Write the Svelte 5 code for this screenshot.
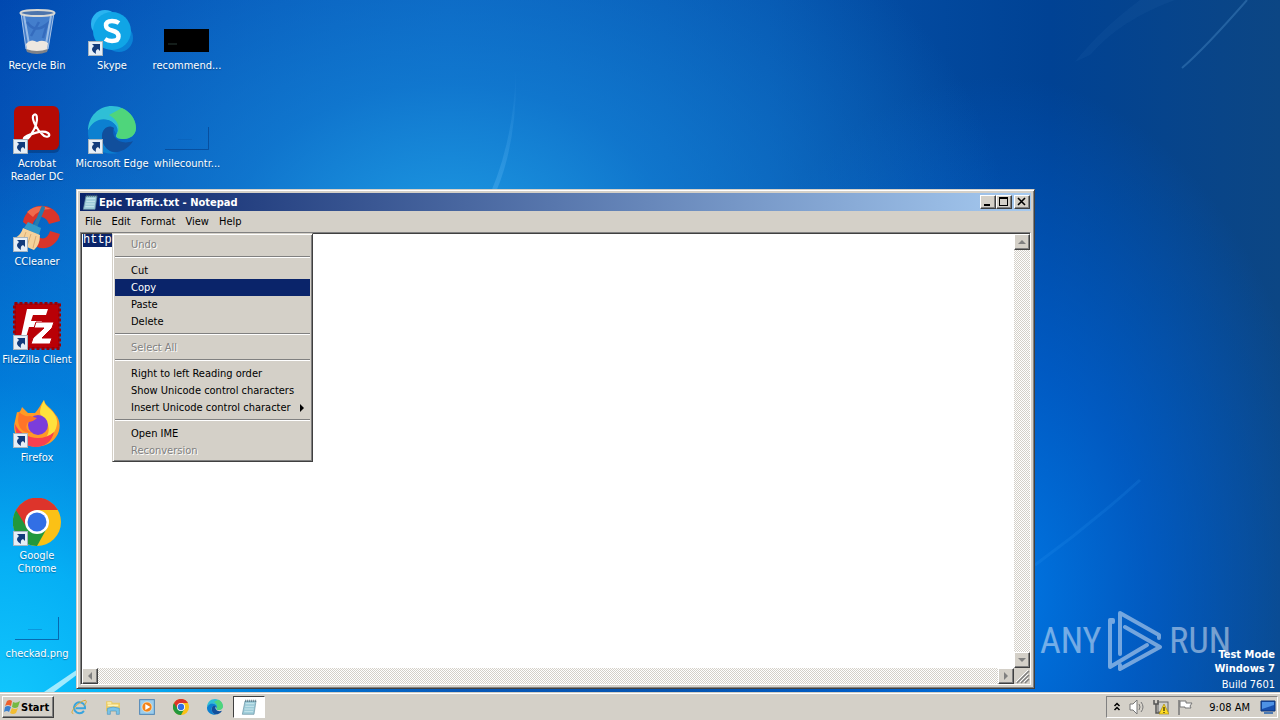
<script>
  const shortcuts = [
    { id: 'bin', label: 'Recycle Bin' },
    { id: 'acrobat', label: 'Acrobat Reader DC', link: true },
    { id: 'ccleaner', label: 'CCleaner', link: true },
    { id: 'filezilla', label: 'FileZilla Client', link: true },
    { id: 'firefox', label: 'Firefox', link: true },
    { id: 'chrome', label: 'Google Chrome', link: true },
    { id: 'clear', label: 'checkad.png' },
    { id: 'skype', label: 'Skype', link: true },
    { id: 'edge', label: 'Microsoft Edge', link: true }
  ];
  const files = [
    { id: 'black', label: 'recommend...' },
    { id: 'clear', label: 'whilecountr...' }
  ];
  const columns = [shortcuts.slice(0, 7), shortcuts.slice(7), files];
  const menus = ['File', 'Edit', 'Format', 'View', 'Help'];
  const groups = [
    [{ t: 'Undo', off: true }],
    [{ t: 'Cut' }, { t: 'Copy', on: true }, { t: 'Paste' }, { t: 'Delete' }],
    [{ t: 'Select All', off: true }],
    [{ t: 'Right to left Reading order' }, { t: 'Show Unicode control characters' }, { t: 'Insert Unicode control character', sub: true }],
    [{ t: 'Open IME' }, { t: 'Reconversion', off: true }]
  ];
  const pinned = ['ie', 'explorer', 'media', 'chrome', 'edge'];
  const names = { ie: 'Internet Explorer', explorer: 'Explorer', media: 'Media Player', chrome: 'Chrome', edge: 'Edge' };
</script>

{#snippet icon(id)}
  <svg viewBox="0 0 48 48" aria-hidden="true">
    {#if id === 'bin'}
      <path d="M8 5L13 41Q24 48 35 41L41 5Z" fill="#6f9fdc" fill-opacity=".6" stroke="#a9c3e6" />
      <path d="M11 8L16 36M38 8L33 36" stroke="#dfeefc" stroke-width="2" opacity=".55" />
      <path d="M14 14Q22 26 34 16L30 30M18 28L26 14" stroke="#2c5fb4" stroke-width="2.500" fill="none" opacity=".6" />
      <path d="M13 36Q18 30 24 34Q30 31 35 35L34 43Q24 47 14 43Z" fill="#eee8e0" />
      <path d="M13 41Q24 45 35 41L34 44Q24 48 14 44Z" fill="#7f8288" />
      <ellipse cx="24.500" cy="5" rx="17" ry="3" fill="#4c74ac" stroke="#d8d8d4" stroke-width="2" />
    {:else if id === 'skype'}
      <circle cx="17" cy="16" r="14" fill="#2ab4f0" />
      <circle cx="31" cy="30" r="14" fill="#0a82d6" />
      <circle cx="24" cy="23" r="19" fill="#10a5e6" />
      <path d="M31 15Q28 13 24 13Q18 13 18 17.500Q18 21 24 22.500Q30.500 24 30.500 28.500Q30.500 33 24 33Q20 33 17 31" fill="none" stroke="#fff" stroke-width="4.500" />
    {:else if id === 'black'}
      <path d="M1 21h45v23H1z" fill="#000" /><path d="M5 36h9" stroke="#293a34" />
    {:else if id === 'clear'}
      <path d="M2 43.500h43.500V21" fill="none" stroke="#053f88" stroke-opacity=".65" /><path d="M15 33.500h14" stroke="#0a5ab0" stroke-opacity=".35" />
    {:else if id === 'acrobat'}
      <rect x="3" y="3" width="44" height="44" rx="6" fill="#042e66" opacity=".45" />
      <rect x="1" y="0" width="45" height="44" rx="6" fill="#b50b04" />
      <path d="M12 35C14 27 30 24 35 27C39 30 33 33 29 28C24 24 19 14 20 10C24 5 25 13 23 19C21 25 15 34 12 34C9 33 12 30 18 28" fill="none" stroke="#fff" stroke-width="2.200" />
    {:else if id === 'edge'}
      <path d="M0 25C0 10 11 0 24 0C38 0 48 11 48 22C48 29 42 33 36 33C31 33 27 32 28 29C32 22 25 14 17 14C8 14 3 19 0 25Z" fill="#2fbfd6" />
      <path d="M34 2C43 6 48 14 48 22C48 29 42 33 36 33C31 33 27 32 29 28C33 21 29 13 21 9Z" fill="#5bdc5c" fill-opacity=".75" />
      <path d="M0 25C4 14 16 10 24 16C30 20 31 25 28 28C25 18 13 21 14 31C15 41 22 47 30 47C14 50-1 41 0 25Z" fill="#0c80d0" />
      <path d="M14 31C14 22 21 18 26 22C22 31 32 40 45 35C39 45 28 48 22 45C17 42 14 37 14 31Z" fill="#114f9c" />
    {:else if id === 'ccleaner'}
      <path d="M46 12C35-5 13 1 10 18L19 25C19 13 31 8 36 20L47 17ZM16 29C17 49 42 49 47 30L37 27C33 39 25 34 23 29Z" fill="#d9352a" />
      <path d="M14 8Q24-1 38 5Q26 5 20 13Z" fill="#f06a4b" />
      <path d="M30 4L22 23" stroke="#267cae" stroke-width="4" stroke-linecap="round" />
      <path d="M15 18L28 24L26 31L11 24Z" fill="#329ac9" />
      <path d="M10 24L27 31Q27 41 21 46Q10 42 2 34Q8 31 10 24Z" fill="#f5d29b" />
      <path d="M13 28L9 39M18 30L14 42M23 32L20 44" stroke="#d9ac73" />
    {:else if id === 'filezilla'}
      <rect x="1.500" y="1.500" width="45" height="45" fill="#b90006" stroke="#980006" stroke-width="3" stroke-dasharray="3 2" />
      <path d="M14 7H35L33 13H20L18 19H29L27 25H16L12 39H7Z" fill="#fff" />
      <path d="M23 20H41L39 26L29 36H39L37 42H18L20 36L31 26H21Z" fill="#fff" stroke="#b90006" />
    {:else if id === 'firefox'}
      <path d="M4 12C7 13 8 10 9 7L15 13L22 13C25 10 28 4 31 0C32 6 39 8 42 14C48 20 48 30 43 37C37 46 24 49 14 45C4 41-1 31 2 21Z" fill="#ff9a26" />
      <path d="M31 0C31 7 39 8 43 17C47 27 39 38 31 40C39 32 36 22 29 17C25 13 28 6 31 0Z" fill="#ffe13d" />
      <path d="M2 24C8 38 29 43 41 32C39 42 31 47 22 47C9 46 2 36 2 24Z" fill="#f8404f" />
      <circle cx="25" cy="25" r="10" fill="#7b3ddb" />
      <path d="M6 12Q11 17 17 16L24 18Q20 22 15 22Q10 30 20 33Q6 34 5 20Z" fill="#ff7428" />
    {:else if id === 'chrome'}
      <circle cx="24" cy="24" r="24" fill="#fbc116" />
      <path d="M24 24L3 12A24 24 0 0 0 24 48L34 30Z" fill="#22983d" />
      <path d="M3 12A24 24 0 0 1 45 12H24L14 30Z" fill="#dd342b" />
      <circle cx="24" cy="24" r="12" fill="#fff" /><circle cx="24" cy="24" r="9.500" fill="#326fe5" />
    {:else if id === 'ie'}
      <path d="M39 36Q29 47 17 40Q5 32 11 19Q18 7 31 11Q43 15 42 28H14" fill="none" stroke="#38a4de" stroke-width="6" />
      <path d="M7 44C-9 42 27 4 43 4C50 6 42 17 39 20" fill="none" stroke="#dca82b" stroke-width="3" />
    {:else if id === 'explorer'}
      <path d="M3 7H20L23 11H45V37H3Z" fill="#eacb68" /><path d="M7 12H19M8 19H40" stroke="#fff4b4" stroke-width="5" />
      <path d="M7 28Q24 20 43 28V46H34V36H16V46H7Z" fill="#79c4e9" stroke="#5297bf" stroke-width="2" />
    {:else if id === 'media'}
      <rect x="2" y="2" width="44" height="44" fill="#9ccdec" stroke="#4b84b5" stroke-width="3" />
      <circle cx="24" cy="24" r="15" fill="#f28217" stroke="#fff0cd" stroke-width="2" /><path d="M19 15L34 24L19 33Z" fill="#fff" />
    {:else if id === 'notepad'}
      <path d="M12 6H45L39 46H4Z" fill="#9ccbd8" stroke="#6b93a3" stroke-width="2" />
      <path d="M14 14H40M13 22H39M11 30H38M10 38H36" stroke="#c9e6ec" stroke-width="3" />
      <path d="M14 2V9M20 2V9M26 2V9M32 2V9M38 2V9M44 2V9" stroke="#45606b" stroke-width="2" />
    {/if}
  </svg>
{/snippet}

{#snippet arrow(d)}
  <svg class="arrow" viewBox="0 0 8 8" aria-hidden="true"><path {d} fill="#808080" /></svg>
{/snippet}

<div class="screen">
  <main class="desktop">
    <svg class="rays" viewBox="0 0 1280 692" preserveAspectRatio="none" aria-hidden="true">
      <defs>
        <linearGradient id="ray" x1="0" y1="0" x2="0" y2="1"><stop stop-color="#79c8ff" stop-opacity="0" /><stop offset=".7" stop-color="#79c8ff" stop-opacity=".18" /><stop offset="1" stop-color="#79c8ff" stop-opacity=".25" /></linearGradient>
      </defs>
      <path d="M516 65Q515 135 491 192H496Q518 140 516 65Z" fill="url(#ray)" />
      <path d="M1247 0Q1205 48 1182 68" stroke="#5598d0" stroke-opacity=".35" stroke-width="2" fill="none" />
      <path d="M1140 0Q1100 30 1075 62L1090 55Q1120 20 1175 0Z" fill="#4a90d0" fill-opacity=".08" />
      <path d="M44 692L78 669V674L54 692Z" fill="#c8f6ff" fill-opacity=".8" />
      <path d="M1035 565Q1090 525 1140 480" stroke="#36a0fa" stroke-opacity=".15" stroke-width="3" fill="none" />
    </svg>

    <div class="columns">
      {#each columns as column}
        <div class="column">
          {#each column as item}
            <button class="shortcut">
              <span class="pic">
                {@render icon(item.id)}
                {#if item.link}
                  <svg class="badge" viewBox="0 0 15 15" aria-hidden="true">
                    <rect x=".5" y=".5" width="14" height="14" fill="#e6eef6" stroke="#a7b4bf" />
                    <path d="M4 3H12V10L10 8Q7 9 8 13Q1 9 6 5Z" fill="#123b7b" />
                  </svg>
                {/if}
              </span>
              <span class="label">{item.label}</span>
            </button>
          {/each}
        </div>
      {/each}
    </div>

    <div class="brand">
      <span>ANY</span>
      <svg viewBox="0 0 56 62" aria-hidden="true">
        <path d="M6 12V10H3V57L40 35" />
        <path d="M13 44V3L52 25V28" />
        <path d="M18 17L53 37L13 59V55" />
      </svg>
      <span>RUN</span>
    </div>
    <div class="build"><strong>Test Mode</strong><strong>Windows 7</strong><span>Build 7601</span></div>

    <section class="window">
      <header class="title">
        <span class="mini">{@render icon('notepad')}</span>
        <h1>Epic Traffic.txt - Notepad</h1>
        <button class="ctl" aria-label="Minimize"><svg viewBox="0 0 12 10"><path d="M2 7H8V9H2Z" /></svg></button>
        <button class="ctl" aria-label="Maximize"><svg viewBox="0 0 12 10"><path d="M1 0H10V9H1ZM2 2V8H9V2Z" fill-rule="evenodd" /></svg></button>
        <button class="ctl close" aria-label="Close"><svg viewBox="0 0 12 10"><path d="M2 1L9 8M9 1L2 8" stroke="#000" stroke-width="1.600" /></svg></button>
      </header>
      <nav class="menubar">
        {#each menus as m}<button>{m}</button>{/each}
      </nav>
      <div class="editor">
        <div class="paper"><mark>http</mark></div>
        <div class="bar vertical">
          <button aria-label="Scroll up">{@render arrow('M0 6L4 2L8 6Z')}</button>
          <button aria-label="Scroll down">{@render arrow('M0 2L4 6L8 2Z')}</button>
        </div>
        <div class="bar horizontal">
          <button aria-label="Scroll left">{@render arrow('M6 0L2 4L6 8Z')}</button>
          <button aria-label="Scroll right">{@render arrow('M2 0L6 4L2 8Z')}</button>
        </div>
        <div class="grip">
          <svg viewBox="0 0 16 16" aria-hidden="true"><path d="M3 15L15 3M7 15L15 7M11 15L15 11" stroke="#808080" stroke-width="1.500" /><path d="M2 14L14 2M6 14L14 6M10 14L14 10" stroke="#fff" /></svg>
        </div>
      </div>
      <div class="popup" role="menu">
        {#each groups as group}
          <div class="group">
            {#each group as g}
              <button role="menuitem" class:off={g.off} class:on={g.on} disabled={g.off}>
                <span>{g.t}</span>
                {#if g.sub}<svg viewBox="0 0 5 8" aria-hidden="true"><path d="M0 0L4 4L0 8Z" /></svg>{/if}
              </button>
            {/each}
          </div>
        {/each}
      </div>
    </section>
  </main>

  <footer class="taskbar">
    <button class="start">
      <svg viewBox="0 0 16 16" aria-hidden="true">
        <path d="M3 2Q6 0 8 2L7 7Q4 5 1 7Z" fill="#ed602d" /><path d="M9 3Q12 5 16 2L14 8Q11 10 8 8Z" fill="#75b943" />
        <path d="M1 8Q4 6 7 8L5 13Q3 11 0 13Z" fill="#3a80cf" /><path d="M8 9Q11 11 14 9L12 14Q9 16 6 14Z" fill="#f2bd32" />
      </svg>
      <b>Start</b>
    </button>
    <nav class="pins">
      {#each pinned as p}<button aria-label={names[p]}>{@render icon(p)}</button>{/each}
      <button class="active" aria-label="Notepad">{@render icon('notepad')}</button>
    </nav>
    <div class="tray">
      <svg class="chev" viewBox="0 0 8 12" aria-hidden="true"><path d="M1.500 5L4 2.500L6.500 5M1.500 9L4 6.500L6.500 9" fill="none" stroke="#000" stroke-width="1.500" /></svg>
      <svg viewBox="0 0 16 16" aria-hidden="true"><path d="M1 5H4L8 1V15L4 11H1Z" fill="#fff" stroke="#777" /><path d="M10 5Q12 8 10 11M12 3Q16 8 12 13" fill="none" stroke="#777" /></svg>
      <svg viewBox="0 0 16 16" aria-hidden="true"><rect x="5" y="3" width="10" height="10" fill="#d0d0cc" stroke="#666" /><path d="M1 1V5H5V1M3 5V14H7" fill="none" stroke="#555" stroke-width="1.500" /><path d="M11 5L16 15H6Z" fill="#ffdc23" stroke="#9b7d00" stroke-width=".6" /><path d="M11 8V12M11 13V14" stroke="#000" /></svg>
      <svg viewBox="0 0 16 16" aria-hidden="true"><path d="M2 1V16" stroke="#777" stroke-width="1.500" /><path d="M3 2H9V4H15L13 7L14 9H8V8H3Z" fill="#fff" stroke="#777" /></svg>
      <time>9:08 AM</time>
      <svg viewBox="0 0 16 16" aria-hidden="true"><path d="M1 2H15V12H1Z" fill="#174fae" stroke="#0c3476" /><path d="M2 3H14V6L2 10Z" fill="#4e92e5" /><path d="M4 14H13" stroke="#4e7cb4" stroke-width="2" /></svg>
    </div>
  </footer>
</div>

<style>
  :global(body) { margin: 0; overflow: hidden; }
  * { box-sizing: border-box; }
  button { font: inherit; color: inherit; background: none; border: 0; padding: 0; margin: 0; }
  svg { display: block; }
  .screen { height: 100vh; display: flex; flex-direction: column; font: 11px/13px "DejaVu Sans Condensed", "DejaVu Sans", sans-serif; color: #000; }
  .desktop {
    position: relative; flex: 1; min-height: 0; overflow: hidden;
    background:
      radial-gradient(ellipse 36% 85% at 0% 106%, #14ccff 0%, rgba(6, 186, 252, .9) 30%, rgba(0, 150, 240, .6) 60%, rgba(0, 120, 220, 0) 100%),
      radial-gradient(ellipse 44% 60% at 35% 36%, rgba(32, 160, 230, .95) 0%, rgba(20, 132, 216, .7) 40%, rgba(0, 96, 196, 0) 100%),
      radial-gradient(ellipse 26% 75% at 78% 86%, rgba(0, 122, 232, .95) 0%, rgba(0, 100, 214, .7) 45%, rgba(0, 80, 180, 0) 100%),
      linear-gradient(90deg, #0048b0 0%, #0858b8 35%, #0552ac 60%, #004294 82%, #0c4684 100%);
  }
  .rays { position: absolute; inset: 0; width: 100%; height: 100%; }
  .columns { position: absolute; top: 8px; left: 1px; display: flex; gap: 3px; color: #fff; }
  .column { width: 72px; display: flex; flex-direction: column; }
  .shortcut { height: 98px; display: flex; flex-direction: column; align-items: center; justify-content: flex-start; gap: 3px; }
  .pic { position: relative; width: 48px; height: 48px; }
  .badge { position: absolute; left: 0; bottom: 0; width: 15px; height: 15px; }
  .label { width: 78px; text-shadow: 0 1px 1px rgba(0, 48, 96, .5); }
  .column:first-child .label { width: 72px; }

  .window {
    position: absolute; left: 76px; top: 189px; width: 959px; height: 500px; padding: 3px;
    display: flex; flex-direction: column; background: #d4d0c8;
    border: 1px solid; border-color: #d4d0c8 #404040 #404040 #d4d0c8;
    box-shadow: inset 1px 1px #fff, inset -1px -1px #808080;
  }
  .title { height: 18px; display: flex; align-items: center; padding: 0 1px 0 2px; background: linear-gradient(90deg, #0a246a, #a6caf0); color: #fff; }
  .mini { width: 16px; height: 16px; margin-right: 1px; }
  h1 { flex: 1; margin: 0; font: inherit; font-weight: bold; }
  .ctl, .bar button, .start { background: #d4d0c8; border: 1px solid; border-color: #fff #404040 #404040 #fff; box-shadow: inset -1px -1px #808080; }
  .ctl { width: 16px; height: 14px; display: grid; place-items: center; }
  .ctl svg { width: 12px; height: 10px; }
  .close { margin-left: 2px; }
  .menubar { height: 21px; display: flex; align-items: center; }
  .menubar button { padding: 0 5px; }
  .editor {
    flex: 1; min-height: 0; display: grid; grid-template: 1fr 16px / 1fr 16px; background: #fff;
    border: 1px solid; border-color: #808080 #fff #fff #808080; box-shadow: inset 1px 1px #404040; padding: 1px 0 0 1px;
  }
  .paper { padding: 0 1px; font: 12px/13px "Liberation Mono", monospace; }
  mark { display: inline-block; background: #0a246a; color: #fff; }
  .bar { display: flex; justify-content: space-between; background: repeating-conic-gradient(#fff 0 25%, #d4d0c8 0 50%) 0 0 / 2px 2px; }
  .vertical { flex-direction: column; }
  .bar button { width: 16px; height: 16px; display: grid; place-items: center; }
  .arrow { width: 8px; height: 8px; }
  .grip { background: #d4d0c8; }
  .popup {
    position: absolute; left: 35px; top: 43px; width: 201px; padding: 2px; background: #d4d0c8;
    border: 1px solid; border-color: #d4d0c8 #404040 #404040 #d4d0c8; box-shadow: inset 1px 1px #fff, inset -1px -1px #808080;
  }
  .group + .group { margin-top: 3px; padding-top: 5px; border-top: 1px solid #808080; box-shadow: inset 0 1px #fff; }
  .popup button { width: 100%; height: 17px; padding: 0 5px 0 16px; display: flex; align-items: center; justify-content: space-between; text-align: left; }
  .popup button svg { width: 5px; height: 8px; }
  .popup .on { background: #0a246a; color: #fff; }
  .popup .off { color: #808080; text-shadow: 1px 1px #fff; }

  .brand { position: absolute; right: 49px; bottom: 20px; display: flex; align-items: center; gap: 6px; color: #fff; opacity: .45; font: 36px/62px "Liberation Sans Narrow", "Roboto Condensed", sans-serif; }
  .brand svg { width: 56px; height: 62px; fill: none; stroke: #fff; stroke-width: 4; stroke-linejoin: round; stroke-linecap: round; }
  .build { position: absolute; right: 5px; bottom: 0; display: flex; flex-direction: column; align-items: flex-end; line-height: 14px; color: #fff; }
  .build strong:last-of-type { margin-bottom: 2px; }

  .taskbar { height: 28px; display: flex; align-items: center; padding: 2px 2px 0; background: #d4d0c8; box-shadow: inset 0 1px #d4d0c8, inset 0 2px #fff; }
  .start { width: 52px; height: 22px; display: flex; align-items: center; gap: 1px; padding: 0 1px; }
  .start svg { width: 16px; height: 16px; }
  .pins { flex: 1; display: flex; align-items: center; padding-left: 9px; gap: 2px; }
  .pins button { width: 32px; height: 22px; display: grid; place-items: center; }
  .pins svg { width: 16px; height: 16px; }
  .pins .active { background: #fff; border: 1px solid; border-color: #404040 #fff #fff #404040; }
  .tray { height: 22px; display: flex; align-items: center; gap: 8px; padding: 0 1px 0 6px; border: 1px solid; border-color: #808080 #fff #fff #808080; }
  .tray svg { width: 16px; height: 16px; }
  .tray .chev { width: 8px; height: 12px; }
  time { padding: 0 2px 0 8px; }
</style>
